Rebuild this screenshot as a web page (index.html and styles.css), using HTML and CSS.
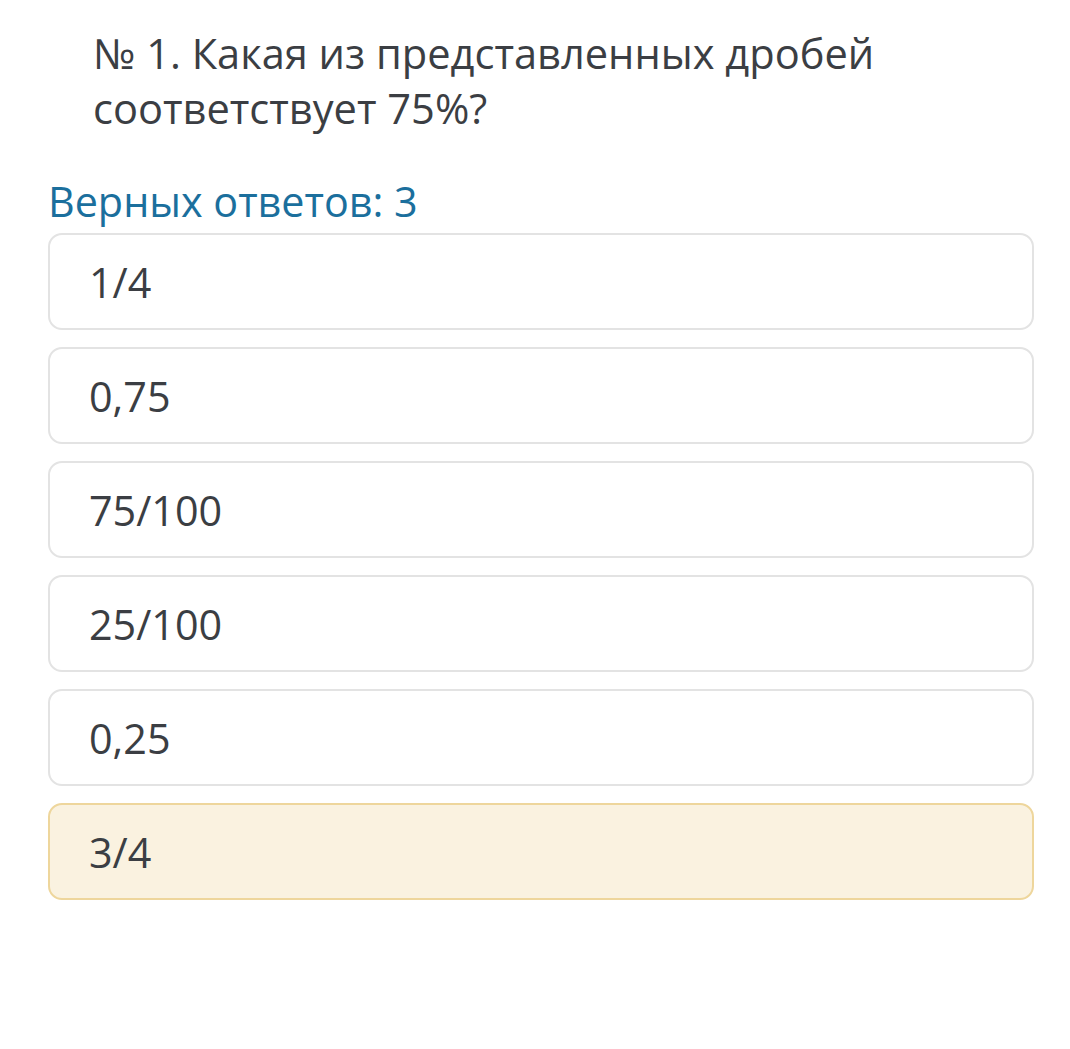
FILE: index.html
```html
<!DOCTYPE html>
<html lang="ru">
<head>
    <meta charset="UTF-8">
    <meta name="viewport" content="width=device-width, initial-scale=1.0">
    <title>Тест</title>
    <link rel="stylesheet" href="styles.css">
</head>
<body>
    <div class="quiz">
        <h2 class="question">№ 1. Какая из представленных дробей соответствует 75%?</h2>
        <div class="hint">Верных ответов: 3</div>
        <ul class="answers">
            <li class="answer">1/4</li>
            <li class="answer">0,75</li>
            <li class="answer">75/100</li>
            <li class="answer">25/100</li>
            <li class="answer">0,25</li>
            <li class="answer selected">3/4</li>
        </ul>
    </div>
</body>
</html>
```

FILE: styles.css
```css
body {
    margin: 0;
    background: #ffffff;
    font-family: 'Open Sans', 'Noto Sans', sans-serif;
    color: #3b3e43;
}

.quiz {
    width: 986px;
    padding: 26px 0 0 48px;
}

.question {
    margin: 0;
    padding: 0 100px 0 45px;
    font-size: 41.6px;
    font-weight: 400;
    line-height: 55px;
    color: #3b3e43;
}

.hint {
    margin-top: 40px;
    font-size: 41.3px;
    line-height: 50px;
    color: #1b6f9d;
}

.answers {
    list-style: none;
    margin: 7px 0 0;
    padding: 0;
    display: flex;
    flex-direction: column;
    gap: 17px;
}

.answer {
    height: 93px;
    display: flex;
    align-items: center;
    padding-left: 39px;
    border: 2px solid #e3e3e3;
    border-radius: 14px;
    font-size: 41.3px;
    background: #ffffff;
}

.answer.selected {
    background: #faf2e0;
    border-color: #eed69c;
}
```
